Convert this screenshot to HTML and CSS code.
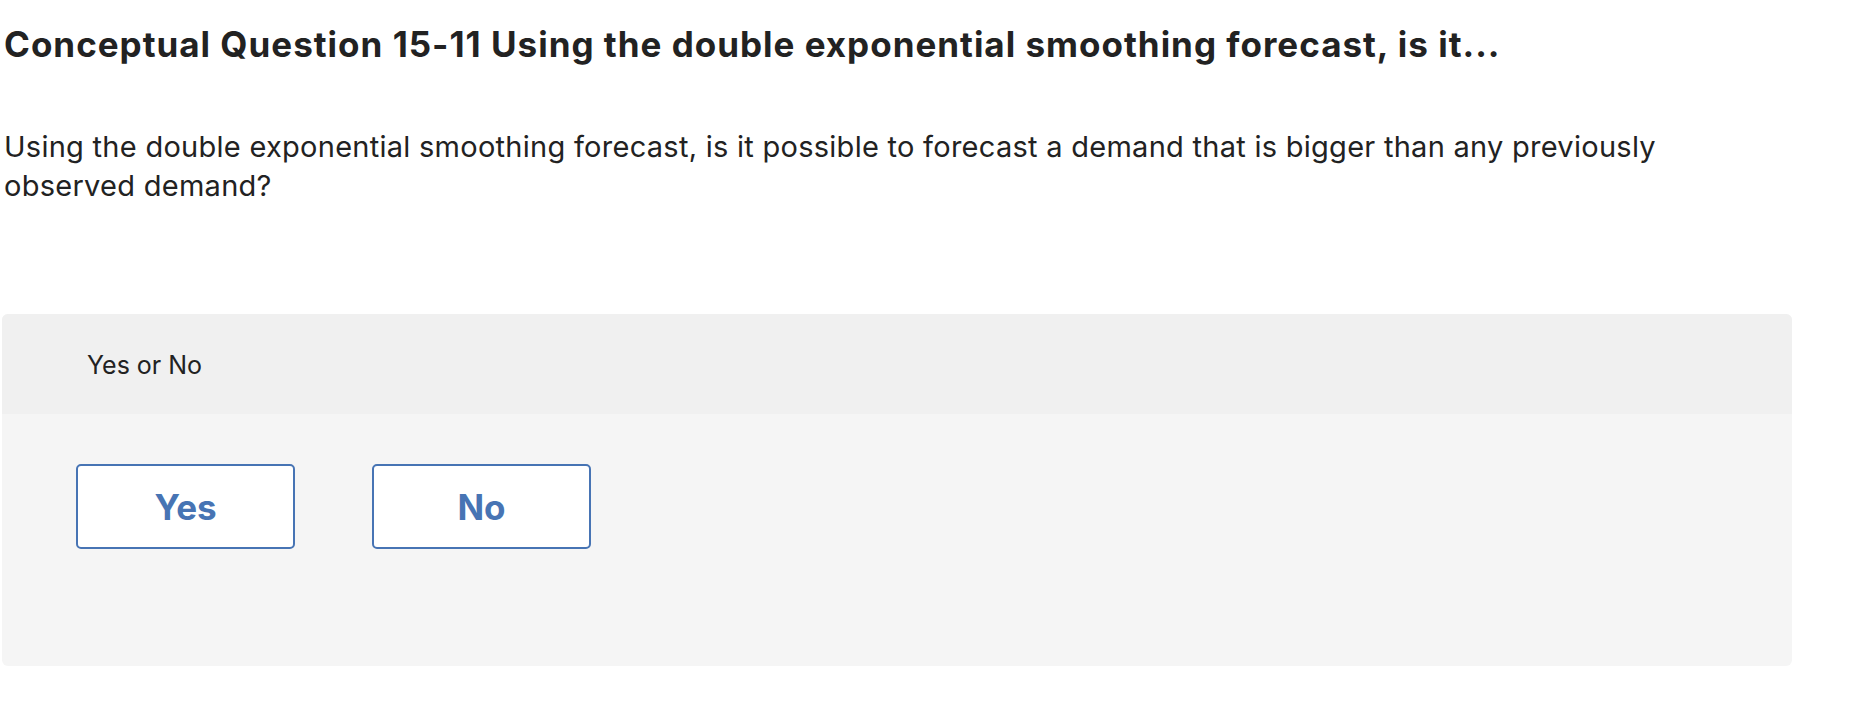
FILE: index.html
```html
<!DOCTYPE html>
<html lang="en">
<head>
<meta charset="utf-8">
<title>Conceptual Question 15-11</title>
<link rel="stylesheet" href="styles.css">
</head>
<body>
<main class="page">
  <h1 class="title">Conceptual Question 15-11 Using the double exponential smoothing forecast, is it...</h1>
  <p class="prompt">Using the double exponential smoothing forecast, is it possible to forecast a demand that is bigger than any previously observed demand?</p>
  <section class="question">
    <header class="question-head">Yes or No</header>
    <div class="question-body">
      <button class="choice" type="button">Yes</button>
      <button class="choice" type="button">No</button>
    </div>
  </section>
</main>
</body>
</html>
```

FILE: styles.css
```css
html, body {
  margin: 0;
  padding: 0;
  background: #ffffff;
}

body {
  font-family: "Inter", "Liberation Sans", sans-serif;
  color: #222222;
}

.page {
  padding: 22px 68px 0 2px;
}

.title {
  margin: 0 0 0 2px;
  font-size: 35px;
  line-height: 44px;
  font-weight: 700;
  letter-spacing: 1px;
  color: #222222;
}

.prompt {
  margin: 61px 0 0 2px;
  max-width: 1720px;
  font-size: 29px;
  line-height: 39px;
  font-weight: 400;
  letter-spacing: 0.27px;
  color: #222222;
}

.question {
  margin-top: 109px;
  border-radius: 6px;
  overflow: hidden;
  background: #f5f5f5;
}

.question-head {
  height: 100px;
  box-sizing: border-box;
  padding: 36px 0 0 85px;
  background: #f0f0f0;
  font-size: 25px;
  line-height: 30px;
  color: #222222;
}

.question-body {
  height: 252px;
  box-sizing: border-box;
  padding: 50px 0 0 74px;
  display: flex;
  gap: 77px;
  align-items: flex-start;
}

.choice {
  width: 219px;
  height: 85px;
  box-sizing: border-box;
  border: 2px solid #4774b4;
  border-radius: 5px;
  background: #ffffff;
  color: #4774b4;
  font-family: "Inter", "Liberation Sans", sans-serif;
  font-weight: 700;
  font-size: 35px;
  padding: 0;
}
```
